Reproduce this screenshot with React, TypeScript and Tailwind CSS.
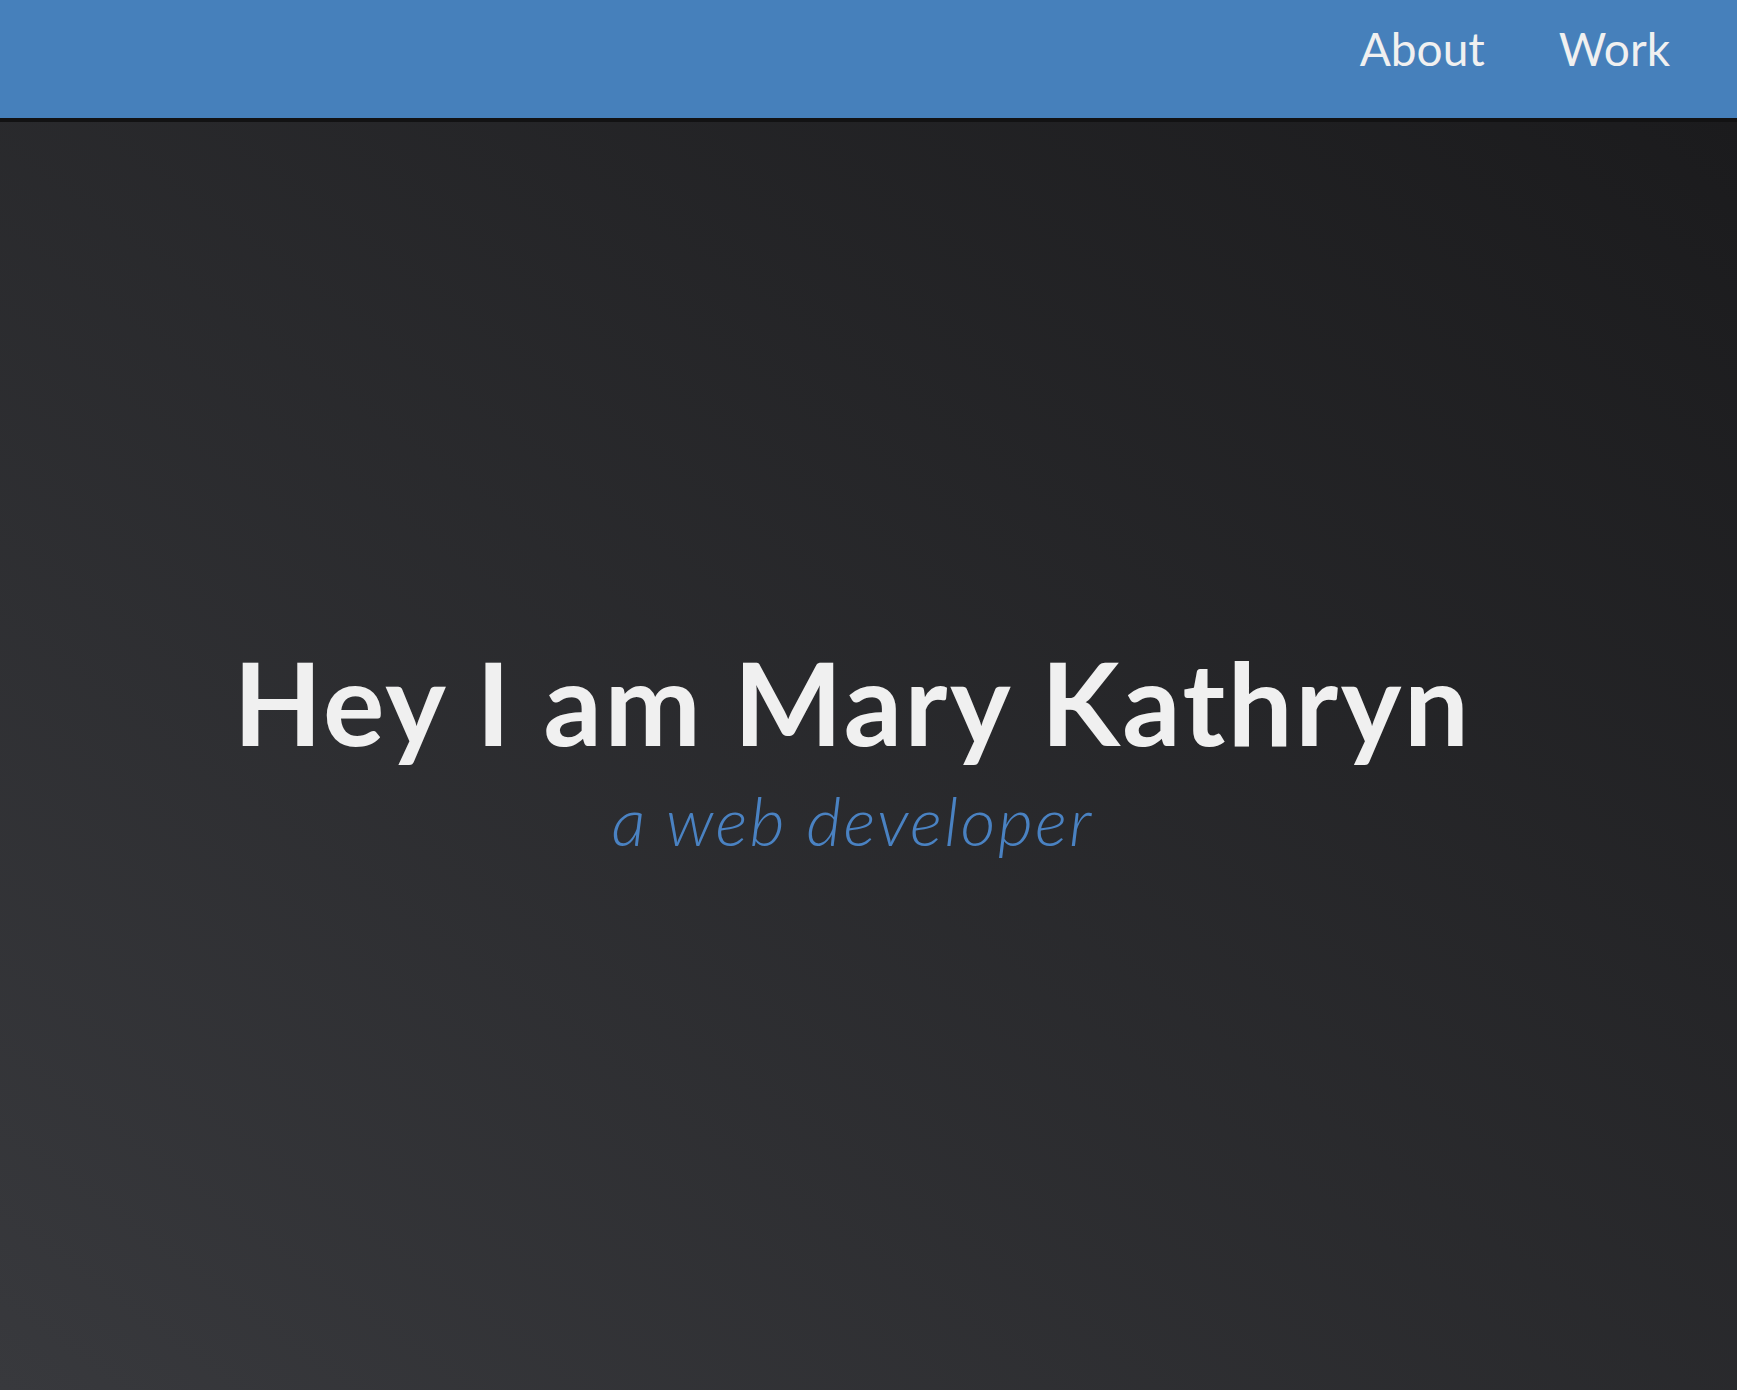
export default function App() {
  return (
    <div className="flex min-h-screen flex-col bg-[#1c1c1e]">
      <header className="flex h-[122px] items-start justify-end border-b-4 border-[#121213] bg-[#4680bb] pr-[67px] pt-[26px] shadow-md">
        <nav className="flex gap-[74px] font-['Lato',sans-serif] text-[46px] leading-none text-[#f0f0f0]">
          <a href="#about">About</a>
          <a href="#work">Work</a>
        </nav>
      </header>

      <main className="flex flex-1 flex-col items-center bg-linear-to-tr from-[#38393d] to-[#1b1b1d] pr-[32px] pt-[522px]">
        <h1 className="font-['Lato',sans-serif] text-[115px] font-bold leading-none tracking-[2.6px] text-[#f0f0f0]">
          Hey I am Mary Kathryn
        </h1>
        <p className="mt-[27px] font-['Lato',sans-serif] text-[68px] font-light italic leading-none tracking-[2.2px] text-[#4a82c2]">
          a web developer
        </p>
      </main>
    </div>
  );
}
